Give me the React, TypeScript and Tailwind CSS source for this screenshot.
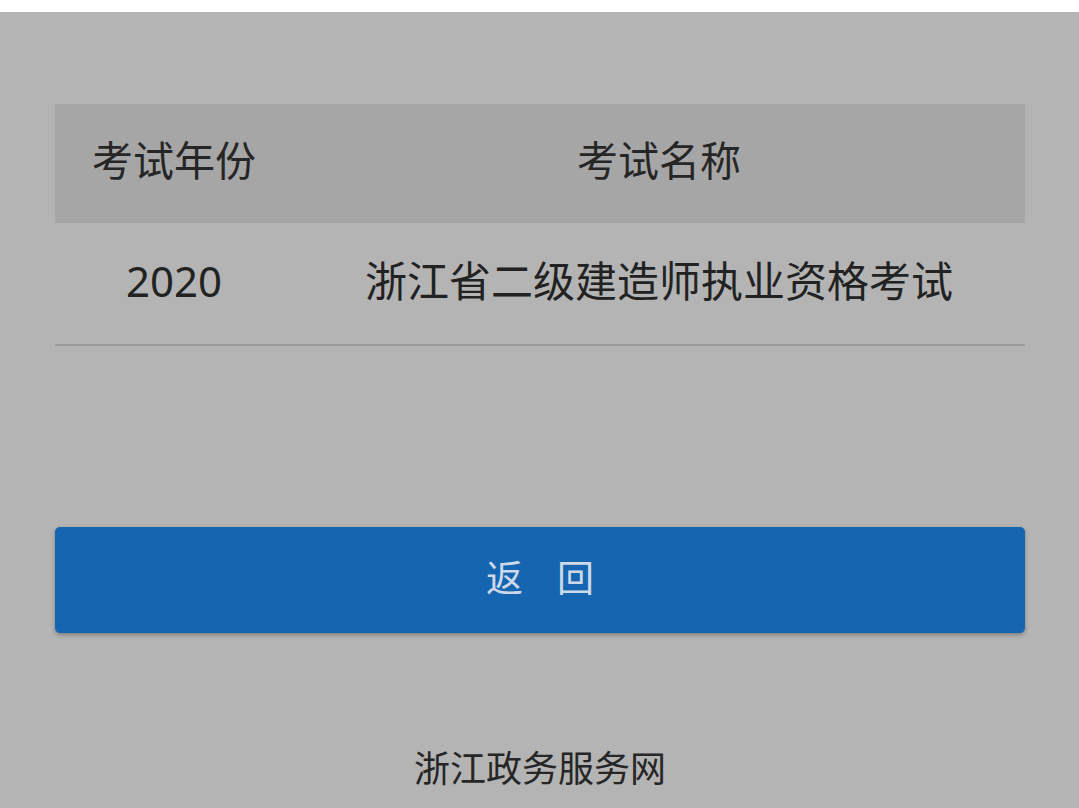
export default function App() {
  const font = { fontFamily: '"Noto Sans", "Noto Sans CJK SC", sans-serif' };

  return (
    <div className="flex h-[808px] w-[1079px] flex-col overflow-hidden bg-[#b4b4b4]" style={font}>
      {/* status strip */}
      <div className="h-[12px] bg-white" />

      <main className="flex flex-1 flex-col pl-[55px] pr-[54px] pt-[92px]">
        {/* result table */}
        <div className="flex flex-col">
          <div className="flex h-[119px] items-center bg-[#a6a6a6] pb-[6px] text-[41px] text-[#262626]">
            <div className="w-[238px] text-center">考试年份</div>
            <div className="flex-1 text-center">考试名称</div>
          </div>
          <div className="flex h-[123px] items-center border-b-2 border-[#9b9b9b] pb-[6px] text-[42px] text-[#222222]">
            <div className="w-[238px] text-center">2020</div>
            <div className="flex-1 text-center">浙江省二级建造师执业资格考试</div>
          </div>
        </div>

        <button className="mt-[181px] flex h-[106px] w-full items-center justify-center gap-[34px] rounded-[5px] bg-[#1565b0] pb-[4px] text-[37px] text-[#cdd9e8] shadow-[0_2px_4px_rgba(0,0,0,0.3)]">
          <span>返</span>
          <span>回</span>
        </button>

        <footer className="mt-auto flex h-[78px] items-start justify-center pt-[12px] text-[36px] text-[#262626]">
          浙江政务服务网
        </footer>
      </main>
    </div>
  );
}
